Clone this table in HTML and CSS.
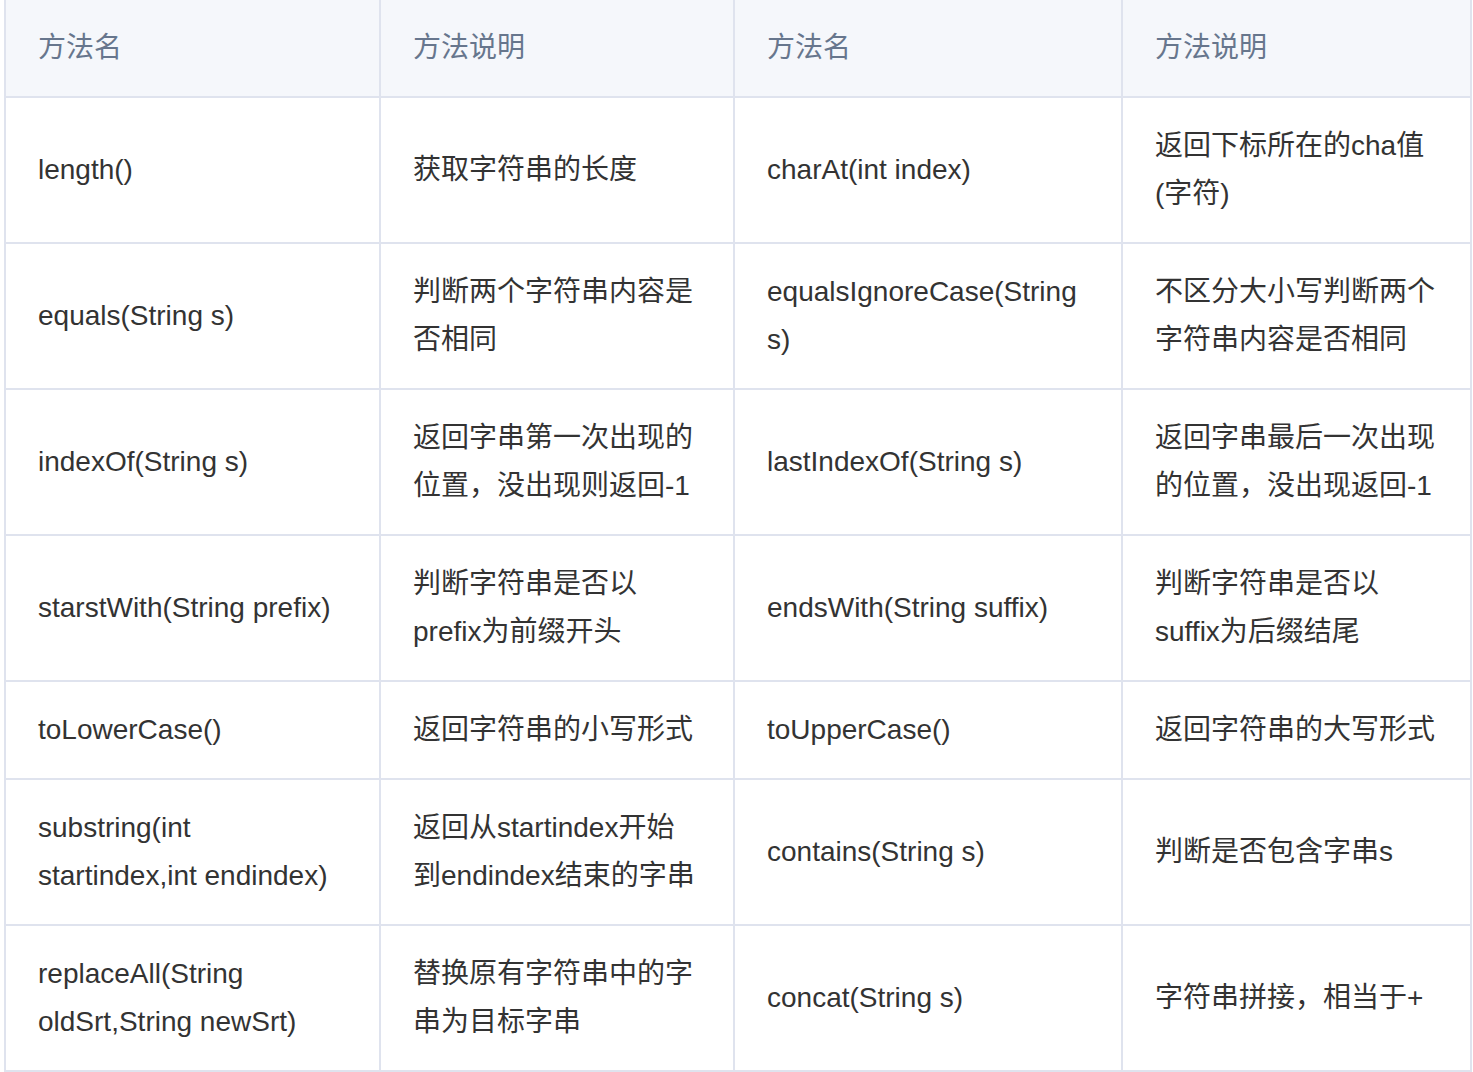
FILE: index.html
```html
<!DOCTYPE html>
<html lang="zh-CN">
<head>
<meta charset="utf-8">
<title>String 方法</title>
<link rel="stylesheet" href="styles.css">
</head>
<body>
<table class="methods">
  <colgroup>
    <col class="c1"><col class="c2"><col class="c3"><col class="c4">
  </colgroup>
  <thead>
    <tr><th>方法名</th><th>方法说明</th><th>方法名</th><th>方法说明</th></tr>
  </thead>
  <tbody>
    <tr><td>length()</td><td>获取字符串的长度</td><td>charAt(int index)</td><td>返回下标所在的cha值(字符)</td></tr>
    <tr><td>equals(String s)</td><td>判断两个字符串内容是否相同</td><td>equalsIgnoreCase(String s)</td><td>不区分大小写判断两个字符串内容是否相同</td></tr>
    <tr><td>indexOf(String s)</td><td>返回字串第一次出现的位置，没出现则返回-1</td><td>lastIndexOf(String s)</td><td>返回字串最后一次出现的位置，没出现返回-1</td></tr>
    <tr><td>starstWith(String prefix)</td><td>判断字符串是否以prefix为前缀开头</td><td>endsWith(String suffix)</td><td>判断字符串是否以suffix为后缀结尾</td></tr>
    <tr><td>toLowerCase()</td><td>返回字符串的小写形式</td><td>toUpperCase()</td><td>返回字符串的大写形式</td></tr>
    <tr><td>substring(int startindex,int endindex)</td><td>返回从startindex开始到endindex结束的字串</td><td>contains(String s)</td><td>判断是否包含字串s</td></tr>
    <tr><td>replaceAll(String oldSrt,String newSrt)</td><td>替换原有字符串中的字串为目标字串</td><td>concat(String s)</td><td>字符串拼接，相当于+</td></tr>
  </tbody>
</table>
</body>
</html>
```

FILE: styles.css
```css
html, body {
  margin: 0;
  padding: 0;
  background: #ffffff;
}

body {
  font-family: "Liberation Sans", "Noto Sans CJK SC", sans-serif;
  font-size: 28px;
  line-height: 48px;
  color: #333333;
}

.methods {
  border-collapse: collapse;
  table-layout: fixed;
  width: 1468px;
  margin: 0 0 0 4px;
}

.methods .c1 { width: 375px; }
.methods .c2 { width: 354px; }
.methods .c3 { width: 388px; }
.methods .c4 { width: 349px; }

.methods th,
.methods td {
  border: 2px solid #dfe3ee;
  padding: 24px 32px;
  text-align: left;
  vertical-align: middle;
  word-wrap: break-word;
}

.methods thead th {
  border-top: none;
  background: #f5f7fb;
  color: #67768d;
  font-weight: normal;
}
```
